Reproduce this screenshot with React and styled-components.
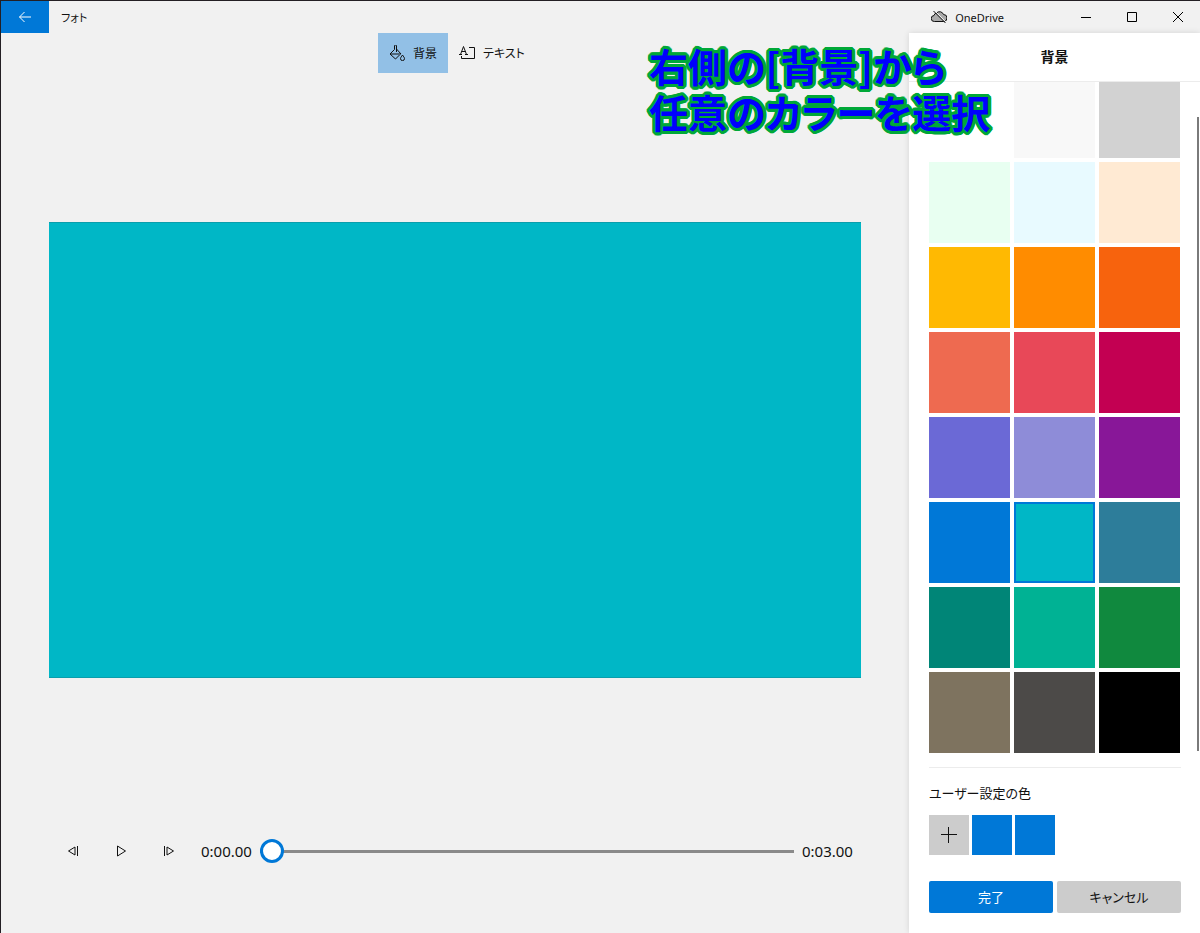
import React, { useState } from 'react'
import styled, { createGlobalStyle } from 'styled-components'

const GlobalStyle = createGlobalStyle`
* {
  box-sizing: border-box;
}

body {
  margin: 0;
  background: #f1f1f1;
  color: #111;
  font-family: "Noto Sans", "Noto Sans CJK JP", sans-serif;
  font-feature-settings: "palt";
  font-size: 12px;
}

button {
  border: 0;
  padding: 0;
  background: none;
  color: inherit;
  font: inherit;
  font-feature-settings: inherit;
  cursor: pointer;
}

svg {
  display: block;
  flex: none;
  fill: none;
  stroke: currentColor;
}
`

const Window = styled.div`
position: relative;
display: flex;
flex-direction: column;
height: 100vh;
border-top: 1px solid #231f24;
border-left: 1px solid #231f24;
overflow: hidden;
`

const TitleBar = styled.header`
display: flex;
align-items: center;
height: 32px;
font-size: 11px;
`

const BackButton = styled.button`
display: flex;
align-items: center;
justify-content: center;
width: 48px;
height: 32px;
background: #0078d7;
color: #fff;
`

const AppName = styled.span`
flex: 1;
padding-left: 12px;
`

const Account = styled.button`
display: flex;
align-items: center;
gap: 8px;
margin-right: 58px;
`

const WindowButton = styled.button`
display: flex;
align-items: center;
justify-content: center;
width: 46px;
height: 32px;
padding-left: 2px;
color: #000;
`

const Body = styled.div`
display: flex;
flex: 1;
min-height: 0;
`

const Editor = styled.main`
display: flex;
flex: 1;
flex-direction: column;
min-width: 0;
padding-bottom: 58px;
`

const Toolbar = styled.div`
display: flex;
justify-content: center;
padding-left: 4px;
`

const ToolButton = styled.button`
display: flex;
align-items: center;
gap: 8px;
height: 40px;
padding: 0 11px;
background: ${props => props.$active ? '#92c0e6' : 'transparent'};
`

const Stage = styled.div`
display: flex;
flex: 1;
align-items: center;
padding: 0 48px;
`

const Preview = styled.div`
width: 100%;
aspect-ratio: 16 / 9;
background: ${props => props.$color};
border: solid #0a9eac;
border-width: 1px 0;
`

const Player = styled.div`
display: flex;
align-items: center;
height: 48px;
padding: 0 48px;
`

const PlayerButton = styled.button`
display: flex;
align-items: center;
justify-content: center;
width: 48px;
height: 48px;
`

const Time = styled.span`
width: 50px;
margin: 0 9px 0 8px;
font-size: 15px;
white-space: nowrap;
`

const Seek = styled.input`
flex: 1;
min-width: 0;
height: 24px;
margin: 0;
appearance: none;
background: transparent;

&::-webkit-slider-runnable-track {
  height: 3px;
  background: #8a8a8a;
}

&::-webkit-slider-thumb {
  appearance: none;
  width: 24px;
  height: 24px;
  margin-top: -11px;
  border: 3px solid #0078d7;
  border-radius: 50%;
  background: #fff;
}
`

const Panel = styled.aside`
display: flex;
flex-direction: column;
width: 291px;
background: #fff;
box-shadow: 0 0 6px rgba(0, 0, 0, 0.12);
`

const PanelTitle = styled.h2`
margin: 0;
border-bottom: 1px solid #ececec;
font-size: 14px;
font-weight: 600;
line-height: 48px;
text-align: center;
`

const Palette = styled.div`
position: relative;
display: flex;
flex: 1;
align-items: flex-end;
min-height: 0;
padding: 0 20px;
overflow: hidden;
`

const Swatches = styled.div`
display: grid;
grid-template-columns: repeat(3, 1fr);
gap: 4px;
width: 100%;
`

const Swatch = styled.button`
aspect-ratio: 1;
background: ${props => props.$color};
border: ${props => props.$selected ? '2px solid #0078d7' : '0'};
`

const ScrollThumb = styled.div`
position: absolute;
top: 35px;
right: 1px;
bottom: 2px;
width: 2px;
background: #7a7a7a;
`

const PanelFooter = styled.footer`
margin: 14px 19px 20px 20px;
border-top: 1px solid #ececec;
`

const Label = styled.h3`
margin: 15px 0 12px;
font-size: 13px;
font-weight: 400;
line-height: 20px;
`

const CustomColors = styled.div`
display: flex;
gap: 3px;
margin-bottom: 26px;
`

const CustomColor = styled.button`
display: flex;
align-items: center;
justify-content: center;
width: 40px;
height: 40px;
background: ${props => props.$color};
`

const Actions = styled.div`
display: grid;
grid-template-columns: 1fr 1fr;
gap: 4px;
`

const ActionButton = styled.button`
height: 32px;
border-radius: 2px;
background: ${props => props.$primary ? '#0078d7' : '#ccc'};
color: ${props => props.$primary ? '#fff' : '#111'};
font-size: 13px;
line-height: 20px;
`

// round outline: one shadow for each point of a 3px ring
const ring = [
  [3, 0], [3, 1], [2, 2], [1, 3],
  [0, 3], [-1, 3], [-2, 2], [-3, 1],
  [-3, 0], [-3, -1], [-2, -2], [-1, -3],
  [0, -3], [1, -3], [2, -2], [3, -1],
]

const Caption = styled.p`
position: absolute;
top: 41px;
left: 648px;
margin: 0;
color: #0000fe;
font-family: "Noto Sans CJK JP", sans-serif;
font-size: 39px;
font-weight: 700;
line-height: 46px;
white-space: nowrap;
text-shadow: ${ring.map(([x, y]) => `${x}px ${y}px 0 #00a838`).join(', ')};
pointer-events: none;
`

const COLORS = [
  '#ffffff', '#f8f8f8', '#d2d2d2',
  '#e8fff1', '#e8faff', '#ffead3',
  '#ffb902', '#ff8c00', '#f7630d',
  '#ee6a50', '#e84858', '#c30052',
  '#6b69d6', '#8e8cd8', '#881798',
  '#0078d7', '#00b7c6', '#2d7d9a',
  '#008577', '#00b294', '#10893e',
  '#7e735f', '#4c4a48', '#000000',
]

const App = () => {
  const [color, setColor] = useState('#00b7c6')
  const [time, setTime] = useState(0)

  return (
    <>
      <GlobalStyle />
      <Window>
        <TitleBar>
          <BackButton aria-label='戻る'>
            <svg width='14' height='12' viewBox='0 0 14 12'>
              <path d='M13 6H1.5M6.5 1l-5 5 5 5' />
            </svg>
          </BackButton>
          <AppName>フォト</AppName>
          <Account>
            <svg width='16' height='14' viewBox='0 0 16 14'>
              <path fill='#aaa' d='M3.5 11.5A3 3 0 0 1 3 5.5 3.2 3.2 0 0 1 5.5 3 4.2 4.2 0 0 1 12.5 4.5 3.5 3.5 0 0 1 12.5 11.5z' />
              <path stroke='#f1f1f1' d='M4 1l11 11' />
              <path d='M2.5 1l12 12' />
            </svg>
            OneDrive
          </Account>
          <WindowButton aria-label='最小化'>
            <svg width='10' height='10' viewBox='0 0 10 10'><path d='M0 5.5h10' /></svg>
          </WindowButton>
          <WindowButton aria-label='最大化'>
            <svg width='10' height='10' viewBox='0 0 10 10'><path d='M.5.5h9v9h-9z' /></svg>
          </WindowButton>
          <WindowButton aria-label='閉じる'>
            <svg width='10' height='10' viewBox='0 0 10 10'><path d='M0 0l10 10M10 0L0 10' /></svg>
          </WindowButton>
        </TitleBar>

        <Body>
          <Editor>
            <Toolbar>
              <ToolButton $active>
                <svg width='16' height='16' viewBox='0 0 16 16'>
                  <path d='M7.5 7V1a1 1 0 0 0-2 0V4.5L1 9l5.5 5 4-4M7.5 4l4.5 5M1 9h11' />
                  <path d='M13.5 10c-1 1.7-2 2.5-2 3.6a2 2 0 0 0 4 0c0-1.1-1-1.9-2-3.6z' />
                </svg>
                背景
              </ToolButton>
              <ToolButton>
                <svg width='16' height='16' viewBox='0 0 16 16'>
                  <path d='M1.5 9.5L4.5 1.5 7.5 9.5M2.5 6.5h4M0 9.5h3M6 9.5h3' />
                  <path d='M10 2.5h5.500v11h-13V11' />
                </svg>
                テキスト
              </ToolButton>
            </Toolbar>

            <Stage>
              <Preview $color={color} />
            </Stage>

            <Player>
              <PlayerButton aria-label='前のフレーム'>
                <svg width='12' height='12' viewBox='0 0 12 12'><path d='M8 2v8L1.5 6zM10.5 1v10' /></svg>
              </PlayerButton>
              <PlayerButton aria-label='再生'>
                <svg width='12' height='12' viewBox='0 0 12 12'><path d='M2.5 1v10l8-5z' /></svg>
              </PlayerButton>
              <PlayerButton aria-label='次のフレーム'>
                <svg width='12' height='12' viewBox='0 0 12 12'><path d='M4 2v8l6.5-4zM1.5 1v10' /></svg>
              </PlayerButton>
              <Time>0:00.00</Time>
              <Seek
                type='range'
                aria-label='再生位置'
                min='0'
                max='3'
                step='0.01'
                value={time}
                onChange={e => setTime(Number(e.target.value))}
              />
              <Time>0:03.00</Time>
            </Player>
          </Editor>

          <Panel>
            <PanelTitle>背景</PanelTitle>
            <Palette>
              <Swatches>
                {COLORS.map(c => (
                  <Swatch
                    key={c}
                    aria-label={c}
                    $color={c}
                    $selected={c === color}
                    onClick={() => setColor(c)}
                  />
                ))}
              </Swatches>
              <ScrollThumb />
            </Palette>
            <PanelFooter>
              <Label>ユーザー設定の色</Label>
              <CustomColors>
                <CustomColor $color='#ccc' aria-label='色の追加'>
                  <svg width='16' height='16' viewBox='0 0 16 16'><path d='M7.5 0v16M0 7.5h16' /></svg>
                </CustomColor>
                <CustomColor $color='#0078d7' aria-label='ユーザー設定の色 1' />
                <CustomColor $color='#0078d7' aria-label='ユーザー設定の色 2' />
              </CustomColors>
              <Actions>
                <ActionButton $primary>完了</ActionButton>
                <ActionButton>キャンセル</ActionButton>
              </Actions>
            </PanelFooter>
          </Panel>
        </Body>

        <Caption>
          右側の[背景]から<br />
          任意のカラーを選択
        </Caption>
      </Window>
    </>
  )
}

export default App
